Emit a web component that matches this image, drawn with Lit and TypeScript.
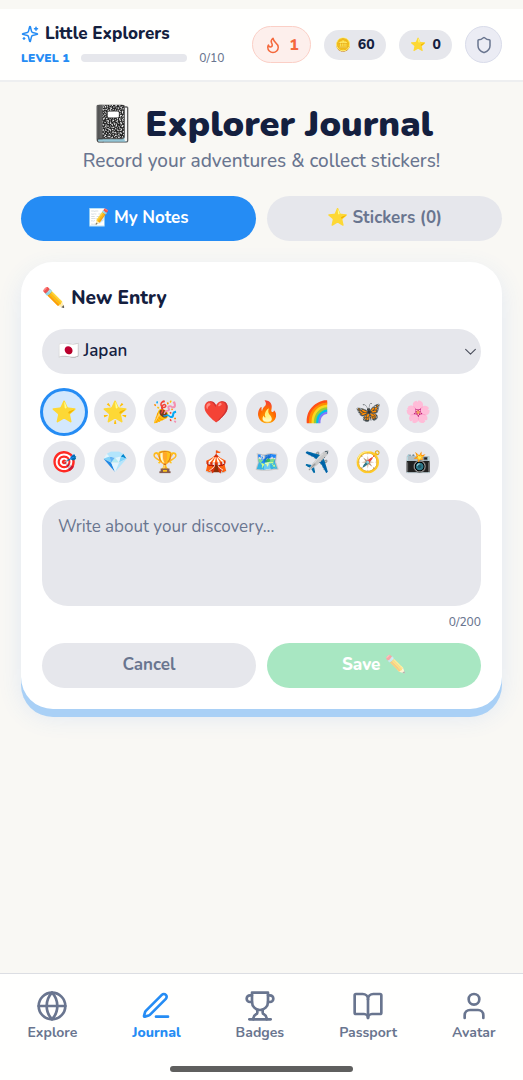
import { LitElement, html, css, svg } from "lit";
import { customElement, state } from "lit/decorators.js";
import { classMap } from "lit/directives/class-map.js";

const icons = {
  sparkles: svg`<path d="M9.937 15.5A2 2 0 0 0 8.5 14.063l-6.135-1.582a.5.5 0 0 1 0-.962L8.5 9.936A2 2 0 0 0 9.937 8.5l1.582-6.135a.5.5 0 0 1 .963 0L14.063 8.5A2 2 0 0 0 15.5 9.937l6.135 1.581a.5.5 0 0 1 0 .964L15.5 14.063a2 2 0 0 0-1.437 1.437l-1.582 6.135a.5.5 0 0 1-.963 0z"/><path d="M20 3v4M22 5h-4M4 17v2M5 18H3"/>`,
  flame: svg`<path d="M8.5 14.5A2.5 2.5 0 0 0 11 12c0-1.38-.5-2-1-3-1.072-2.143-.224-4.054 2-6 .5 2.5 2 4.9 4 6.5 2 1.6 3 3.5 3 5.5a7 7 0 1 1-14 0c0-1.153.433-2.294 1-3a2.5 2.5 0 0 0 2.5 2.5z"/>`,
  shield: svg`<path d="M20 13c0 5-3.5 7.5-7.66 8.95a1 1 0 0 1-.67-.01C7.5 20.5 4 18 4 13V6a1 1 0 0 1 1-1c2 0 4.5-1.2 6.24-2.72a1.17 1.17 0 0 1 1.52 0C14.51 3.81 17 5 19 5a1 1 0 0 1 1 1z"/>`,
  globe: svg`<circle cx="12" cy="12" r="10"/><path d="M12 2a14.5 14.5 0 0 0 0 20 14.5 14.5 0 0 0 0-20"/><path d="M2 12h20"/>`,
  pen: svg`<path d="M12 20h9"/><path d="M16.376 3.622a1 1 0 0 1 3.002 3.002L7.368 18.635a2 2 0 0 1-.855.506l-2.872.838a.5.5 0 0 1-.62-.62l.838-2.872a2 2 0 0 1 .506-.854z"/>`,
  trophy: svg`<path d="M6 9H4.500a2.500 2.500 0 0 1 0-5H6"/><path d="M18 9h1.500a2.500 2.500 0 0 0 0-5H18"/><path d="M4 22h16"/><path d="M10 14.660V17c0 .55-.47.980-.97 1.210C7.850 18.750 7 20.240 7 22"/><path d="M14 14.660V17c0 .55.47.980.97 1.210C16.150 18.750 17 20.240 17 22"/><path d="M18 2H6v7a6 6 0 0 0 12 0V2Z"/>`,
  book: svg`<path d="M12 7v14"/><path d="M3 18a1 1 0 0 1-1-1V4a1 1 0 0 1 1-1h5a4 4 0 0 1 4 4 4 4 0 0 1 4-4h5a1 1 0 0 1 1 1v13a1 1 0 0 1-1 1h-6a3 3 0 0 0-3 3 3 3 0 0 0-3-3z"/>`,
  user: svg`<path d="M19 21v-2a4 4 0 0 0-4-4H9a4 4 0 0 0-4 4v2"/><circle cx="12" cy="7" r="4"/>`,
  chevron: svg`<path d="m3 8 9 9 9-9"/>`,
};

const icon = (name: keyof typeof icons, size: string) =>
  html`<svg class="icon ${size}" viewBox="0 0 24 24" aria-hidden="true">${icons[name]}</svg>`;

const stickers = ["⭐", "🌟", "🎉", "❤️", "🔥", "🌈", "🦋", "🌸", "🎯", "💎", "🏆", "🎪", "🗺️", "✈️", "🧭", "📸"];

const links: { label: string; icon: keyof typeof icons }[] = [
  { label: "Explore", icon: "globe" },
  { label: "Journal", icon: "pen" },
  { label: "Badges", icon: "trophy" },
  { label: "Passport", icon: "book" },
  { label: "Avatar", icon: "user" },
];

@customElement("app-root")
export class AppRoot extends LitElement {
  @state() private tab = "notes";
  @state() private sticker = 0;
  @state() private note = "";

  static styles = css`
    :host {
      --ink: #14203f;
      --muted: #69758f;
      --blue: #258cf4;
      --soft: #e6e7ec;
      --line: #dcdee3;
      display: flex;
      flex-direction: column;
      min-height: 100vh;
      box-sizing: border-box;
      padding-top: 9px;
      background: #f9f8f4;
      color: var(--ink);
      font-family: Nunito, "Open Sans", "Noto Sans", sans-serif;
      font-size: 17px;
      line-height: 24px;
    }
    *, *::before { box-sizing: border-box; }
    button, select, textarea {
      font: inherit;
      color: inherit;
      border: 0;
      margin: 0;
    }
    button { cursor: pointer; padding: 0; }
    h1, h2, p { margin: 0; }
    .icon {
      display: block;
      flex: none;
      fill: none;
      stroke: currentColor;
      stroke-width: 2;
      stroke-linecap: round;
      stroke-linejoin: round;
    }
    .small { width: 18px; height: 18px; }
    .large { width: 32px; height: 32px; }

    .top {
      display: flex;
      align-items: center;
      justify-content: space-between;
      height: 73px;
      padding: 0 21px;
      background: #fffffe;
      border-bottom: 2px solid #eeeff0;
    }
    .profile { padding-top: 2px; }
    .brand { display: flex; align-items: center; gap: 6px; font-weight: 800; }
    .brand .icon { color: var(--blue); }
    .level {
      display: flex;
      align-items: center;
      gap: 12px;
      font-size: 12px;
      font-weight: 500;
      color: var(--muted);
    }
    .level strong { color: var(--blue); font-weight: 900; }
    .track {
      appearance: none;
      width: 106px;
      height: 8px;
      border: 0;
      border-radius: 4px;
      background: var(--soft);
      overflow: hidden;
    }
    .track::-webkit-progress-bar { background: var(--soft); }
    .track::-webkit-progress-value { background: var(--blue); }
    .stats { display: flex; align-items: center; gap: 13px; font-weight: 800; }
    .chip {
      display: flex;
      align-items: center;
      gap: 7px;
      height: 30px;
      padding: 0 11px;
      border-radius: 15px;
      background: var(--soft);
      font-size: 14px;
    }
    .emoji { font-size: 13px; }
    .streak {
      height: 37px;
      border: 1px solid #fbcfc6;
      border-radius: 19px;
      background: #fdefec;
      color: #f4683c;
      font-size: 16px;
    }
    .round {
      display: grid;
      place-items: center;
      width: 37px;
      height: 37px;
      border: 1px solid #d9dcea;
      border-radius: 50%;
      background: #ebecf4;
      color: var(--muted);
    }

    main {
      flex: 1;
      display: flex;
      flex-direction: column;
      padding: 21px;
    }
    .title {
      font-size: 36px;
      line-height: 44px;
      font-weight: 900;
      text-align: center;
    }
    .sub {
      font-size: 19px;
      line-height: 28px;
      font-weight: 500;
      color: var(--muted);
      text-align: center;
    }
    .pair { display: grid; grid-template-columns: 1fr 1fr; gap: 11px; }
    .tabs { margin: 21px 0; }
    .pill {
      height: 45px;
      padding-bottom: 2px;
      border-radius: 23px;
      background: var(--soft);
      color: var(--muted);
      font-weight: 700;
    }
    .pill.active { background: var(--blue); color: #fff; }
    .pill.save { background: #53d086; color: #fff; font-weight: 800; }
    .pill:disabled { opacity: 0.5; }

    .card {
      display: flex;
      flex-direction: column;
      padding: 21px;
      border-radius: 32px;
      background: #fff;
      box-shadow: 0 8px 0 #a9d0f6, 0 8px 24px rgba(60, 120, 240, 0.12);
    }
    .card h2 { font-size: 19px; line-height: 30px; font-weight: 800; }
    .picker { position: relative; margin: 16px 0 17px; }
    .picker select {
      display: block;
      appearance: none;
      width: 100%;
      height: 45px;
      padding: 0 32px 2px 16px;
      border-radius: 23px;
      background: var(--soft);
      font-weight: 600;
    }
    .picker .icon {
      position: absolute;
      right: 4px;
      top: 16px;
      width: 13px;
      height: 13px;
      color: #4b4f5c;
      pointer-events: none;
    }
    .stickers {
      display: grid;
      grid-template-columns: repeat(8, 42px);
      justify-content: space-between;
      row-gap: 8px;
      width: 91%;
      padding: 0 2px 0 1px;
    }
    .sticker {
      height: 42px;
      border-radius: 50%;
      background: var(--soft);
      font-size: 21px;
    }
    .sticker.active {
      background: #d3e8fd;
      box-shadow: 0 0 0 3px var(--blue);
    }
    textarea {
      display: block;
      width: 100%;
      height: 106px;
      margin-top: 17px;
      padding: 15px 16px;
      border-radius: 26px;
      background: var(--soft);
      resize: none;
    }
    textarea::placeholder { color: var(--muted); opacity: 1; }
    .count {
      margin: 7px 0 12px;
      font-size: 12px;
      line-height: 18px;
      font-weight: 500;
      text-align: right;
      color: var(--muted);
    }

    .bottom {
      display: flex;
      justify-content: space-around;
      padding-top: 16px;
      border-top: 1px solid var(--line);
      background: #fffffe;
    }
    .bottom a {
      display: flex;
      flex-direction: column;
      align-items: center;
      color: var(--muted);
      font-size: 14px;
      line-height: 22px;
      font-weight: 700;
      text-decoration: none;
    }
    .bottom a.active { color: var(--blue); font-weight: 800; }
    .home { padding: 22px 0 8px; background: #fffffe; }
    .home div {
      width: 35%;
      height: 6px;
      margin: 0 auto;
      border-radius: 3px;
      background: #5f5f5e;
    }
  `;

  render() {
    return html`
      <header class="top">
        <div class="profile">
          <div class="brand">${icon("sparkles", "small")}Little Explorers</div>
          <div class="level">
            <strong>LEVEL 1</strong>
            <progress class="track" max="10" value="0" aria-label="Level progress"></progress>
            <span>0/10</span>
          </div>
        </div>
        <div class="stats">
          <span class="chip streak">${icon("flame", "small")}1</span>
          <span class="chip"><span class="emoji">🪙</span>60</span>
          <span class="chip"><span class="emoji">⭐</span>0</span>
          <button class="round" aria-label="Parent area">${icon("shield", "small")}</button>
        </div>
      </header>

      <main>
        <h1 class="title">📓 Explorer Journal</h1>
        <p class="sub">Record your adventures &amp; collect stickers!</p>
        <div class="pair tabs">
          <button class=${classMap({ pill: true, active: this.tab === "notes" })} @click=${() => (this.tab = "notes")}>📝 My Notes</button>
          <button class=${classMap({ pill: true, active: this.tab === "stickers" })} @click=${() => (this.tab = "stickers")}>⭐ Stickers (0)</button>
        </div>

        <section class="card">
          <h2><label for="note">✏️ New Entry</label></h2>
          <div class="picker">
            <select aria-label="Country">
              <option>🇯🇵 Japan</option>
            </select>
            ${icon("chevron", "")}
          </div>
          <div class="stickers">
            ${stickers.map(
              (s, i) => html`<button
                class=${classMap({ sticker: true, active: i === this.sticker })}
                aria-pressed=${i === this.sticker}
                @click=${() => (this.sticker = i)}
              >${s}</button>`
            )}
          </div>
          <textarea
            id="note"
            maxlength="200"
            placeholder="Write about your discovery..."
            .value=${this.note}
            @input=${(e: Event) => (this.note = (e.target as HTMLTextAreaElement).value)}
          ></textarea>
          <p class="count">${this.note.length}/200</p>
          <div class="pair">
            <button class="pill" @click=${() => (this.note = "")}>Cancel</button>
            <button class="pill save" ?disabled=${!this.note}>Save ✏️</button>
          </div>
        </section>
      </main>

      <nav class="bottom">
        ${links.map(
          (l) => html`<a href="#" class=${classMap({ active: l.label === "Journal" })}>${icon(l.icon, "large")}${l.label}</a>`
        )}
      </nav>
      <div class="home"><div></div></div>
    `;
  }
}
